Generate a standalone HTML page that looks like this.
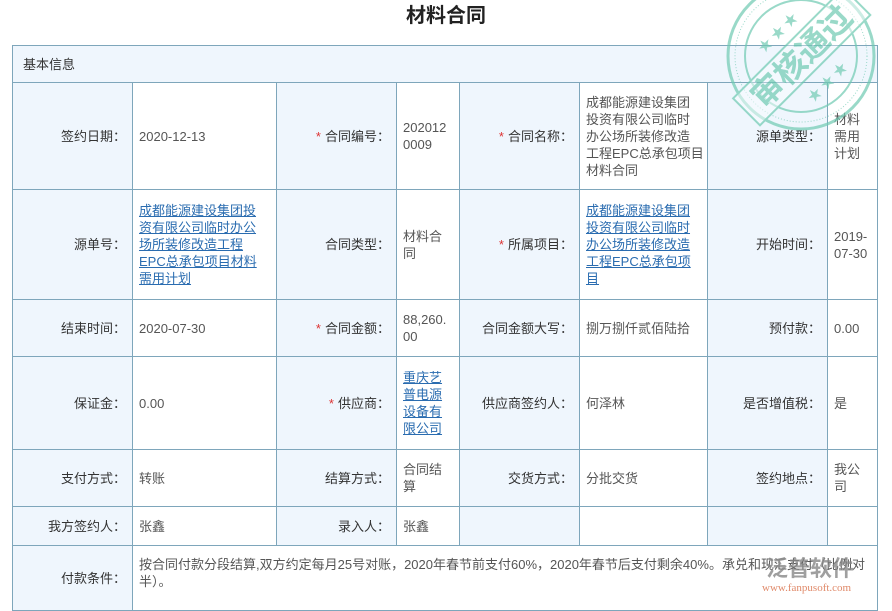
<!DOCTYPE html>
<html><head><meta charset="utf-8"><style>
body{margin:0;width:892px;height:600px;overflow:hidden;background:#fff;font-family:"Liberation Sans","Noto Sans CJK SC",sans-serif;position:relative}
.t{position:absolute;left:0;top:3px;width:892px;text-align:center;font-size:20px;font-weight:bold;color:#222;line-height:26px}
.c{position:absolute;box-sizing:border-box;border:1px solid #7ea6bb;display:flex;align-items:center;font-size:13px;line-height:17px;color:#555;padding:0 6px;white-space:nowrap}
.l{background:#eff6fd;justify-content:flex-end;color:#333;text-align:right;padding-right:6px}
.v{background:#fff}
.s{color:#d33;margin-right:4px}
a{color:#2a6cb0;text-decoration:underline}
</style></head><body>
<div class="t">材料合同</div>
<div class="c l" style="left:12px;top:45px;width:866px;height:38px;justify-content:flex-start;padding-left:10px">基本信息</div>
<div id="g"></div>
<script>
var X=[12,132,276,396,459,579,707,827,877],Y=[82,189,299,356,449,506,545,610];
var D=[
["签约日期：","2020-12-13","<span class=s>*</span>合同编号：","202012<br>0009","<span class=s>*</span>合同名称：","成都能源建设集团<br>投资有限公司临时<br>办公场所装修改造<br>工程EPC总承包项目<br>材料合同","源单类型：","材料<br>需用<br>计划"],
["源单号：","<a>成都能源建设集团投<br>资有限公司临时办公<br>场所装修改造工程<br>EPC总承包项目材料<br>需用计划</a>","合同类型：","材料合<br>同","<span class=s>*</span>所属项目：","<a>成都能源建设集团<br>投资有限公司临时<br>办公场所装修改造<br>工程EPC总承包项<br>目</a>","开始时间：","2019-<br>07-30"],
["结束时间：","2020-07-30","<span class=s>*</span>合同金额：","88,260.<br>00","合同金额大写：","捌万捌仟贰佰陆拾","预付款：","0.00"],
["保证金：","0.00","<span class=s>*</span>供应商：","<a>重庆艺<br>普电源<br>设备有<br>限公司</a>","供应商签约人：","何泽林","是否增值税：","是"],
["支付方式：","转账","结算方式：","合同结<br>算","交货方式：","分批交货","签约地点：","我公<br>司"],
["我方签约人：","张鑫","录入人：","张鑫","","","",""]];
var h="";
for(var r=0;r<6;r++)for(var k=0;k<8;k++){
h+='<div class="c '+(k%2?'v':'l')+'" style="left:'+X[k]+'px;top:'+Y[r]+'px;width:'+(X[k+1]-X[k]+1)+'px;height:'+(Y[r+1]-Y[r]+1)+'px"><div>'+D[r][k]+'</div></div>';}
h+='<div class="c l" style="left:12px;top:545px;width:121px;height:66px">付款条件：</div>';
h+='<div class="c v" style="left:132px;top:545px;width:746px;height:66px;align-items:flex-start;padding-top:10px"><div>按合同付款分段结算,双方约定每月25号对账，2020年春节前支付60%，2020年春节后支付剩余40%。承兑和现汇支付（比例对<br>半）。</div></div>';
document.getElementById("g").innerHTML=h;
</script>
<svg style="position:absolute;left:725px;top:-20px" width="152" height="152" viewBox="0 0 152 152" opacity="0.7">
<g fill="none" stroke="#6fcab2">
<circle cx="76" cy="76" r="73" stroke-width="3"/>
<circle cx="76" cy="76" r="66" stroke-width="1" stroke-dasharray="1 2"/>
<circle cx="76" cy="76" r="56" stroke-width="2"/>
</g>
<g transform="rotate(-45 76 76)">
<rect x="-2" y="58" width="156" height="38" fill="#fff" fill-opacity="0.5" stroke="#6fcab2" stroke-width="2"/>
<text x="76" y="88" text-anchor="middle" font-size="32" font-weight="bold" fill="#6fcab2" font-family="Noto Sans CJK SC,sans-serif">审核通过</text>
<text x="76" y="48" text-anchor="middle" font-size="14" fill="#6fcab2">★ ★ ★</text>
<text x="76" y="118" text-anchor="middle" font-size="14" fill="#6fcab2">★ ★ ★</text>
</g>
</svg>
<div style="position:absolute;left:766px;top:551px;font-size:22px;font-weight:bold;color:#888;opacity:.8;font-family:'Noto Sans CJK SC',sans-serif">泛普软件</div>
<div style="position:absolute;left:762px;top:582px;font-size:11px;color:#e08a6a;font-family:'Liberation Serif',serif">www.fanpusoft.com</div>
</body></html>
